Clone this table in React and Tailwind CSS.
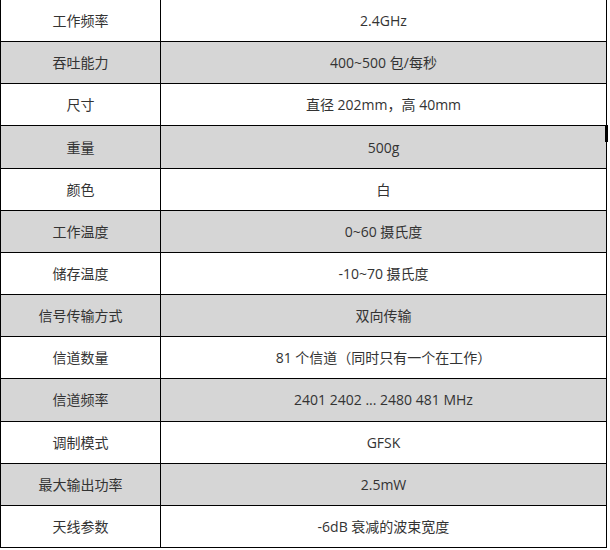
import React from 'react';

const rows = [
  ['工作频率', '2.4GHz'],
  ['吞吐能力', '400~500 包/每秒'],
  ['尺寸', '直径 202mm，高 40mm'],
  ['重量', '500g'],
  ['颜色', '白'],
  ['工作温度', '0~60 摄氏度'],
  ['储存温度', '-10~70 摄氏度'],
  ['信号传输方式', '双向传输'],
  ['信道数量', '81 个信道（同时只有一个在工作）'],
  ['信道频率', '2401 2402 ... 2480 481 MHz'],
  ['调制模式', 'GFSK'],
  ['最大输出功率', '2.5mW'],
  ['天线参数', '-6dB 衰减的波束宽度'],
];

export default function App() {
  return (
    <div className="relative w-[610px] h-[550px] overflow-hidden bg-white">
      <div
        className="w-[607px] border-x border-black text-[14px] text-[#333]"
        style={{ fontFamily: '"Open Sans", "Noto Sans CJK SC", sans-serif' }}
      >
        {rows.map(([k, v], i) => (
          <div
            key={k}
            className={`flex h-[42.17px] border-b border-black ${i % 2 === 1 ? 'bg-[#d6d6d6]' : 'bg-white'}`}
          >
            <div className="w-[160px] border-r border-black flex items-center justify-center">{k}</div>
            <div className="flex-1 flex items-center justify-center">{v}</div>
          </div>
        ))}
      </div>
      <div className="absolute left-[605px] top-[125px] w-[3px] h-[17px] bg-black" />
    </div>
  );
}
